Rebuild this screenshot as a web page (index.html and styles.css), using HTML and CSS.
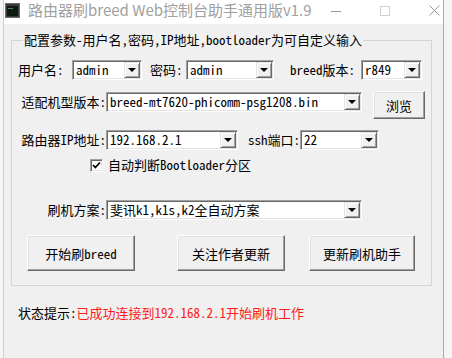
FILE: index.html
```html
<!DOCTYPE html>
<html lang="zh-CN">
<head>
  <meta charset="UTF-8" />
  <meta name="viewport" content="width=device-width, initial-scale=1.0"/>
  <title>路由器刷breed Web控制台助手通用版v1.9</title>
  <link rel="stylesheet" href="styles.css">
</head>
<body>

<div class="window">
  <div class="titlebar">
    <svg class="app-icon" width="15" height="15" viewBox="0 0 15 15">
      <rect x="0.5" y="0.5" width="14" height="14" fill="#3a3a3a" stroke="#6b6b6b"/>
      <rect x="2" y="3" width="11" height="10" fill="#0f1a12"/>
      <rect x="3" y="5" width="5" height="1" fill="#4c8a5a"/>
    </svg>
    <span class="title">路由器刷breed Web控制台助手通用版v1.9</span>
    <div class="win-btns">
      <span class="win-btn">
        <svg width="10" height="10" viewBox="0 0 10 10"><path d="M0 5.5h10" stroke="#9a9a9a"/></svg>
      </span>
      <span class="win-btn">
        <svg width="10" height="10" viewBox="0 0 10 10"><rect x="0.5" y="0.5" width="9" height="9" fill="none" stroke="#d0d0d0"/></svg>
      </span>
      <span class="win-btn">
        <svg width="11" height="11" viewBox="0 0 11 11"><path d="M0.5 0.5l10 10M10.5 0.5l-10 10" stroke="#9a9a9a"/></svg>
      </span>
    </div>
  </div>

  <div class="client">
    <fieldset class="group">
      <legend>配置参数-用户名,密码,IP地址,bootloader为可自定义输入</legend>

      <div class="row row-account">
        <span class="lbl lbl-user">用户名:</span>
        <div class="combo combo-user"><span class="combo-text">admin</span><span class="drop"></span></div>
        <span class="lbl lbl-pass">密码:</span>
        <div class="combo combo-pass"><span class="combo-text">admin</span><span class="drop"></span></div>
        <span class="lbl lbl-ver">breed版本:</span>
        <div class="combo combo-ver"><span class="combo-text">r849</span><span class="drop"></span></div>
      </div>

      <div class="row row-firmware">
        <span class="lbl lbl-col">适配机型版本:</span>
        <div class="combo combo-wide"><span class="combo-text">breed-mt7620-phicomm-psg1208.bin</span><span class="drop"></span></div>
        <button class="btn btn-browse">浏览</button>
      </div>

      <div class="row row-ip">
        <span class="lbl lbl-col">路由器IP地址:</span>
        <div class="combo combo-ip"><span class="combo-text">192.168.2.1</span><span class="drop"></span></div>
        <span class="lbl lbl-ssh">ssh端口:</span>
        <div class="combo combo-port"><span class="combo-text">22</span><span class="drop"></span></div>
      </div>

      <label class="row row-check">
        <span class="checkbox">
          <svg width="9" height="9" viewBox="0 0 9 9"><path d="M1 4l2.3 2.5L8 1.5" fill="none" stroke="#000" stroke-width="1.8"/></svg>
        </span>
        <span class="check-text">自动判断Bootloader分区</span>
      </label>

      <div class="row row-plan">
        <span class="lbl lbl-col">刷机方案:</span>
        <div class="combo combo-wide"><span class="combo-text">斐讯k1,k1s,k2全自动方案</span><span class="drop"></span></div>
      </div>

      <div class="row row-actions">
        <button class="btn btn-start">开始刷breed</button>
        <button class="btn btn-follow">关注作者更新</button>
        <button class="btn btn-update">更新刷机助手</button>
      </div>
    </fieldset>

    <div class="status">
      <span class="status-label">状态提示:</span><span class="status-msg">已成功连接到192.168.2.1开始刷机工作</span>
    </div>
  </div>
</div>

</body>
</html>
```

FILE: styles.css
```css
body {
  margin: 0;
  padding: 0;
  background-color: #f5f5f5;
  font-family: "Noto Sans Mono CJK SC", "Noto Sans CJK SC", sans-serif;
  font-size: 13px;
  color: #000;
}

.window {
  margin-left: 3px;
  width: 439px;
  height: 358px;
  background-color: #f0f0f0;
  border-left: 1px solid #cfcfcf;
  border-right: 1px solid #a9a9a9;
}

.titlebar {
  height: 24px;
  background-color: #ffffff;
  display: flex;
  align-items: flex-start;
}

.app-icon {
  margin: 3px 0 0 1px;
  flex: none;
}

.title {
  margin-left: 8px;
  font-family: "Noto Sans CJK SC", sans-serif;
  font-size: 15px;
  line-height: 20px;
  color: #a0a0a0;
  white-space: nowrap;
}

.win-btns {
  margin-left: auto;
  display: flex;
}

.win-btn {
  width: 49px;
  height: 21px;
  display: flex;
  align-items: center;
  justify-content: center;
}

.client {
  padding: 8px 0 0 7px;
}

.group {
  box-sizing: border-box;
  width: 421px;
  margin: 0;
  padding: 0 0 14px 6px;
  border: 1px solid #d5d5d5;
}

.group legend {
  margin-left: 5px;
  padding: 0 1px;
  line-height: 16px;
}

.row {
  display: flex;
  align-items: center;
  white-space: nowrap;
}

.lbl {
  flex: none;
  line-height: 16px;
}

.lbl-col {
  width: 88px;
  text-align: right;
}

/* combo boxes */
.combo {
  box-sizing: border-box;
  height: 20px;
  flex: none;
  display: flex;
  align-items: stretch;
  background-color: #fff;
  border: 1px solid;
  border-color: #a0a0a0 #ffffff #ffffff #a0a0a0;
  box-shadow: inset 1px 1px 0 #696969, inset -1px -1px 0 #e3e3e3;
  padding: 1px;
}

.combo-text {
  flex: 1;
  min-width: 0;
  padding-left: 2px;
  line-height: 16px;
}

.drop {
  box-sizing: border-box;
  width: 16px;
  flex: none;
  background-color: #f0f0f0;
  border: 1px solid;
  border-color: #e3e3e3 #696969 #696969 #e3e3e3;
  box-shadow: inset 1px 1px 0 #fff, inset -1px -1px 0 #a0a0a0;
  display: flex;
  align-items: center;
  justify-content: center;
}

.drop::after {
  content: "";
  width: 0;
  height: 0;
  border-left: 4px solid transparent;
  border-right: 4px solid transparent;
  border-top: 4px solid #000;
}

/* row 1 */
.row-account {
  margin-top: 12px;
  height: 20px;
}

.lbl-user { width: 54px; }
.combo-user { width: 70px; }
.lbl-pass { width: 36px; margin-left: 8px; }
.combo-pass { width: 88px; }
.lbl-ver { width: 71px; margin-left: 16px; }
.combo-ver { width: 61px; }

/* row 2 */
.row-firmware {
  margin-top: 11px;
  height: 28px;
  align-items: flex-start;
}

.row-firmware .lbl-col {
  margin-top: 3px;
}

.row-firmware .combo {
  margin-top: 1px;
}

.combo-wide { width: 256px; }

.btn {
  box-sizing: border-box;
  font-family: inherit;
  font-size: 13px;
  color: #000;
  background-color: #f0f0f0;
  border: 1px solid;
  border-color: #ffffff #696969 #696969 #ffffff;
  box-shadow: inset -1px -1px 0 #a0a0a0, inset 1px 1px 0 #e3e3e3;
  padding: 0;
  flex: none;
}

.btn-browse {
  width: 52px;
  height: 28px;
  margin-left: 11px;
}

/* row 3 */
.row-ip {
  margin-top: 11px;
  height: 20px;
}

.combo-ip { width: 132px; }
.lbl-ssh { width: 52px; margin-left: 10px; }
.combo-port { width: 79px; }

/* checkbox */
.row-check {
  margin-top: 8px;
  height: 14px;
}

.checkbox {
  box-sizing: border-box;
  width: 13px;
  height: 13px;
  margin-left: 72px;
  background-color: #fff;
  border: 1px solid;
  border-color: #a0a0a0 #ffffff #ffffff #a0a0a0;
  box-shadow: inset 1px 1px 0 #696969, inset -1px -1px 0 #e3e3e3;
  display: flex;
  align-items: center;
  justify-content: center;
}

.check-text {
  margin-left: 5px;
  line-height: 16px;
}

/* row 4 */
.row-plan {
  margin-top: 28px;
  height: 20px;
}

/* buttons */
.row-actions {
  margin-top: 15px;
  height: 36px;
}

.row-actions .btn { height: 36px; }
.btn-start { width: 108px; margin-left: 9px; }
.btn-follow { width: 108px; margin-left: 42px; }
.btn-update { width: 106px; margin-left: 24px; }

.status {
  margin-top: 19px;
  padding-left: 7px;
  line-height: 16px;
}

.status-msg {
  color: #ff1a1a;
}
```
